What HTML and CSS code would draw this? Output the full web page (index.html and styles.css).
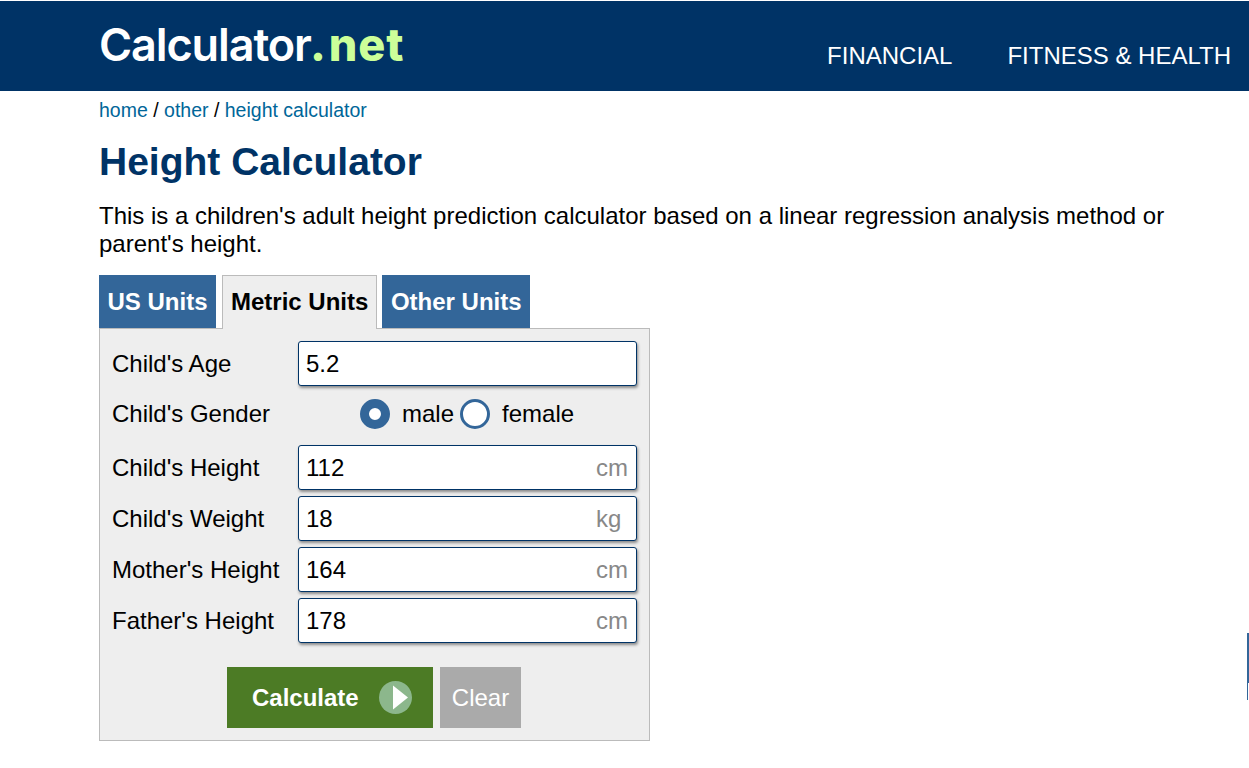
FILE: index.html
```html
<!DOCTYPE html>
<html lang="en">
    <head>
        <meta charset="UTF-8" />
        <meta name="viewport" content="width=device-width, initial-scale=1.0" />
        <title>Height Calculator</title>
        <link rel="stylesheet" href="styles.css">
    </head>
    <body>
        <div class="header">
            <a class="logo" href="#">Calculator<span class="logo-net"><span class="logo-dot">.</span>net</span></a>
            <div class="nav">
                <a href="#">FINANCIAL</a>
                <a href="#">FITNESS &amp; HEALTH</a>
            </div>
        </div>

        <div class="content">
            <div class="breadcrumb"><a href="#">home</a> / <a href="#">other</a> / <a href="#">height calculator</a></div>
            <h1>Height Calculator</h1>
            <p class="intro">This is a children's adult height prediction calculator based on a linear regression analysis method or parent's height.</p>

            <div class="tabs">
                <a class="tab" href="#">US Units</a>
                <a class="tab active" href="#">Metric Units</a>
                <a class="tab" href="#">Other Units</a>
            </div>

            <form class="panel">
                <div class="row">
                    <label for="age">Child's Age</label>
                    <div class="field"><input id="age" type="text" value="5.2" /></div>
                </div>
                <div class="row gender">
                    <span class="label">Child's Gender</span>
                    <div class="radios">
                        <input id="male" class="radio" type="radio" name="gender" checked />
                        <label for="male">male</label>
                        <input id="female" class="radio" type="radio" name="gender" />
                        <label for="female">female</label>
                    </div>
                </div>
                <div class="row">
                    <label for="height">Child's Height</label>
                    <div class="field"><input id="height" type="text" value="112" /><span class="unit">cm</span></div>
                </div>
                <div class="row">
                    <label for="weight">Child's Weight</label>
                    <div class="field"><input id="weight" type="text" value="18" /><span class="unit">kg</span></div>
                </div>
                <div class="row">
                    <label for="mother">Mother's Height</label>
                    <div class="field"><input id="mother" type="text" value="164" /><span class="unit">cm</span></div>
                </div>
                <div class="row">
                    <label for="father">Father's Height</label>
                    <div class="field"><input id="father" type="text" value="178" /><span class="unit">cm</span></div>
                </div>
                <div class="buttons">
                    <button class="btn-calc" type="button">
                        Calculate
                        <svg class="play" width="33" height="33" viewBox="0 0 33 33">
                            <circle cx="16.5" cy="16.5" r="16.5" fill="#8cb78c" />
                            <path d="M14 4.5 L29 16.5 L14 28.5 Z" fill="#fff" />
                        </svg>
                    </button>
                    <button class="btn-clear" type="button">Clear</button>
                </div>
            </form>
        </div>

        <div class="edge"></div>
    </body>
</html>
```

FILE: styles.css
```css
body {
    font-family: "Liberation Sans", Arial, sans-serif;
    margin: 0;
    padding-top: 1px;
    color: #000;
    background: #fff;
    overflow: hidden;
}

a {
    text-decoration: none;
}

.header {
    display: flex;
    justify-content: space-between;
    height: 90px;
    padding: 0 18px 0 99px;
    background: #003366;
}

.logo {
    font-family: Inter, sans-serif;
    font-size: 45px;
    font-weight: 600;
    line-height: 88px;
    letter-spacing: -1.1px;
    color: #fff;
}

.logo-net {
    font-weight: 800;
    letter-spacing: 1px;
    color: #ccff99;
}

.logo-dot {
    margin: 0 2px 0 -1px;
}

.nav {
    display: flex;
    gap: 55px;
    padding-top: 41px;
    font-size: 24px;
    line-height: 28px;
}

.nav a {
    color: #fff;
}

.content {
    padding-left: 99px;
}

.breadcrumb {
    margin-top: 6px;
    font-size: 19.5px;
    line-height: 26px;
}

.breadcrumb a {
    color: #006699;
}

h1 {
    margin: 17px 0 0;
    font-size: 39px;
    line-height: 44px;
    font-weight: bold;
    color: #003366;
}

.intro {
    width: 1090px;
    margin: 18px 0 0;
    font-size: 24px;
    line-height: 28px;
}

.tabs {
    display: flex;
    gap: 5px;
    margin-top: 17px;
}

.tab {
    height: 53px;
    padding: 0 8.5px;
    font-size: 24px;
    font-weight: bold;
    line-height: 53px;
    color: #fff;
    background: #336699;
}

.tab.active {
    margin-left: 1px;
    margin-bottom: -1px;
    padding: 0 8px;
    line-height: 51px;
    color: #000;
    background: #eeeeee;
    border: 1px solid #bbbbbb;
    border-bottom: none;
    position: relative;
}

.panel {
    width: 525px;
    height: 387px;
    padding: 12px;
    background: #eeeeee;
    border: 1px solid #bbbbbb;
}

.row {
    display: flex;
    align-items: center;
    margin-bottom: 6px;
    font-size: 24px;
}

.row label,
.label {
    width: 186px;
}

.field {
    position: relative;
    width: 339px;
    height: 45px;
}

.field input {
    box-sizing: border-box;
    width: 339px;
    height: 45px;
    padding: 0 7px;
    font-family: inherit;
    font-size: 24px;
    color: #000;
    background: #fff;
    border: 1px solid #003366;
    border-radius: 3px;
    box-shadow: 1px 2px 3px #8a8a8a;
    outline: none;
}

.unit {
    position: absolute;
    left: 298px;
    top: 9px;
    font-size: 24px;
    color: #888888;
}

.gender {
    height: 44px;
    margin-bottom: 9px;
}

.radios {
    display: flex;
    align-items: center;
    padding-left: 62px;
}

.radios label {
    width: auto;
}

.radio {
    appearance: none;
    box-sizing: border-box;
    width: 30px;
    height: 30px;
    margin: 0 12px 0 0;
    background: #fff;
    border: 3px solid #336699;
    border-radius: 50%;
}

.radio:checked {
    border-width: 9px;
}

.radios label[for="male"] {
    margin-right: 6px;
}

.buttons {
    display: flex;
    gap: 7px;
    margin-top: 24px;
    padding-left: 115px;
}

.btn-calc,
.btn-clear {
    height: 61px;
    border: none;
    font-family: inherit;
    font-size: 24px;
    color: #fff;
}

.btn-calc {
    display: flex;
    align-items: center;
    justify-content: space-between;
    width: 206px;
    padding: 0 21px 0 25px;
    font-weight: bold;
    background: #4c7b25;
}

.btn-clear {
    width: 81px;
    padding: 0;
    background: #aaaaaa;
}

.edge {
    position: absolute;
    right: 0;
    top: 633px;
    width: 2px;
    height: 50px;
    background: #336699;
}

.edge::after {
    content: "";
    position: absolute;
    left: 0;
    top: 50px;
    width: 1px;
    height: 17px;
    background: #336699;
}
```
